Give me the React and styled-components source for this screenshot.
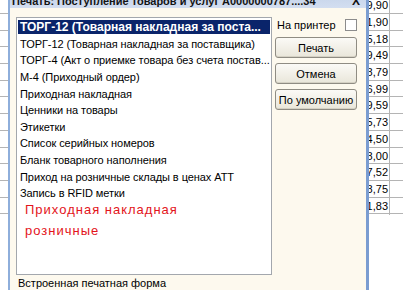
import React from "react";
import styled, { createGlobalStyle } from "styled-components";

const GlobalStyle = createGlobalStyle`
  html, body {
    margin: 0;
    padding: 0;
    background: #fff;
  }
  body {
    font-family: "Liberation Sans", Arial, sans-serif;
    color: #000;
  }
`;

const Page = styled.div`
  position: relative;
  width: 403px;
  height: 290px;
  overflow: hidden;
  background: #fff;
`;

/* table of the document behind the dialog */
const BgTable = styled.div`
  margin-top: -2.7px;
`;

const BgRow = styled.div`
  display: grid;
  grid-template-columns: 390px 1fr;
  height: 16.7px;
  box-sizing: border-box;
  border-bottom: 1px solid #b4b4b4;
`;

const NumCell = styled.div`
  text-align: right;
  padding-right: 1px;
  border-right: 1px solid #b4b4b4;
  font-size: 11px;
  line-height: 17px;
`;

const Dialog = styled.div`
  position: absolute;
  left: 8px;
  top: -12px;
  width: 361px;
  height: 310px;
  box-sizing: border-box;
  border-left: 2px solid #8eaedb;
  border-right: 3px solid #7b9dd1;
  background: #fdf9ee;
  display: flex;
  flex-direction: column;
`;

const TitleBar = styled.div`
  height: 20px;
  box-sizing: border-box;
  padding: 7px 6px 0 2px;
  line-height: 13px;
  background: linear-gradient(#bfcfe6, #d3def0);
  display: flex;
  justify-content: space-between;
  font-size: 11px;
  font-weight: bold;
  color: #141414;
  white-space: nowrap;
`;

const Close = styled.span`
  font-size: 12px;
`;

const Body = styled.div`
  display: flex;
  gap: 3px;
  padding: 9px 9px 0 6px;
`;

const ListBox = styled.div`
  width: 256px;
  height: 258px;
  box-sizing: border-box;
  border: 1px solid #a3a7ad;
  background: #fff;
  padding: 1px;
  overflow: hidden;
`;

const Row = styled.div`
  height: 16.6px;
  box-sizing: border-box;
  padding: 1.3px 0;
  background-clip: content-box;
  background-color: ${(p) => (p.$selected ? "#0a246a" : "transparent")};
  color: ${(p) => (p.$selected ? "#fff" : "#000")};
  font-size: ${(p) => (p.$selected ? "12px" : "11px")};
  font-weight: ${(p) => (p.$selected ? "bold" : "normal")};
  letter-spacing: ${(p) => (p.$selected ? "0" : "-0.07px")};
  line-height: 14px;
  white-space: nowrap;
  overflow: hidden;
`;

const Label = styled.span`
  padding-left: 2px;
`;

const RedNote = styled.div`
  margin-top: -3px;
  padding-left: 7px;
  color: #e3141b;
  font-size: 13px;
  letter-spacing: 1px;
  line-height: 21px;
`;

const Side = styled.div`
  width: 82px;
  display: flex;
  flex-direction: column;
  gap: 5px;
  padding-top: 1px;
`;

const PrinterRow = styled.div`
  height: 14px;
  display: flex;
  align-items: center;
  justify-content: space-between;
  padding-left: 2px;
  font-size: 11px;
`;

const CheckBox = styled.span`
  width: 12px;
  height: 12px;
  box-sizing: border-box;
  border: 1px solid #8c8c8c;
  background: #fff;
`;

const Button = styled.button`
  height: 21px;
  width: 100%;
  padding: 0;
  border: 1px solid #8f8c83;
  border-radius: 3px;
  background: linear-gradient(#fbfaf6, #e9e6da);
  box-shadow: inset 0 -1px 0 #d5d1c4;
  font-family: inherit;
  font-size: 11px;
  color: #000;
`;

const Status = styled.div`
  padding-left: 8px;
  margin-top: 1px;
  height: 14px;
  line-height: 14px;
  font-size: 11px;
`;

const numbers = [
  "29,90", "51,90", "35,18", "29,49", "68,79", "76,99", "79,59",
  "65,73", "14,50", "78,00", "27,52", "38,75", "21,83",
];

const forms = [
  "ТОРГ-12 (Товарная накладная за поста...",
  "ТОРГ-12 (Товарная накладная за поставщика)",
  "ТОРГ-4 (Акт о приемке товара без счета постав...",
  "М-4 (Приходный ордер)",
  "Приходная накладная",
  "Ценники на товары",
  "Этикетки",
  "Список серийных номеров",
  "Бланк товарного наполнения",
  "Приход на розничные склады в ценах АТТ",
  "Запись в RFID метки",
];

export default function App() {
  return (
    <>
      <GlobalStyle />
      <Page>
        <BgTable>
          {numbers.map((n) => (
            <BgRow key={n}>
              <NumCell>{n}</NumCell>
              <div />
            </BgRow>
          ))}
        </BgTable>

        <Dialog>
          <TitleBar>
            <span>Печать: Поступление товаров и услуг А0000000787....34</span>
            <Close>X</Close>
          </TitleBar>
          <Body>
            <ListBox>
              {forms.map((f, i) => (
                <Row key={f} $selected={i === 0}>
                  <Label>{f}</Label>
                </Row>
              ))}
              <RedNote>
                Приходная накладная
                <br />
                розничные
              </RedNote>
            </ListBox>
            <Side>
              <PrinterRow>
                На принтер
                <CheckBox />
              </PrinterRow>
              <Button>Печать</Button>
              <Button>Отмена</Button>
              <Button>По умолчанию</Button>
            </Side>
          </Body>
          <Status>Встроенная печатная форма</Status>
        </Dialog>
      </Page>
    </>
  );
}
